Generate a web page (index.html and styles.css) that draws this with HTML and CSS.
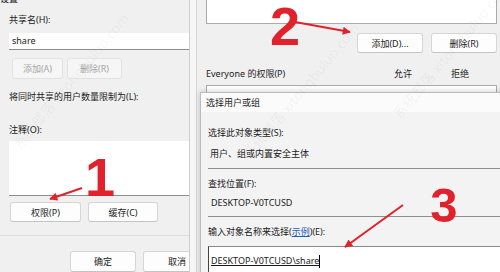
FILE: index.html
```html
<!DOCTYPE html>
<html lang="zh-CN">
<head>
    <meta charset="UTF-8">
    <title>共享权限设置</title>
    <link rel="stylesheet" href="styles.css">
</head>
<body>
    <div class="screen">
        <!-- 高级共享 -->
        <div class="share-dialog">
            <div class="cut-title"><span>设置</span></div>
            <div class="label first-label">共享名(H):</div>
            <div class="input share-name">share</div>
            <div class="btn-row add-row">
                <button class="btn disabled w-add">添加(A)</button>
                <button class="btn disabled w-del">删除(R)</button>
            </div>
            <div class="label limit-label">将同时共享的用户数量限制为(L):</div>
            <div class="label comment-label">注释(O):</div>
            <div class="textarea"></div>
            <div class="btn-row perm-row">
                <button class="btn w-perm">权限(P)</button>
                <button class="btn w-cache">缓存(C)</button>
            </div>
            <div class="separator"></div>
            <div class="btn-row ok-row">
                <button class="btn w-ok">确定</button>
                <button class="btn w-ok w-cancel">取消</button>
            </div>
        </div>
        <div class="strip"></div>

        <!-- share 的权限 -->
        <div class="perm-dialog">
            <div class="listbox top-list"></div>
            <div class="btn-row right-row">
                <button class="btn w-mid">添加(D)...</button>
                <button class="btn w-mid">删除(R)</button>
            </div>
            <div class="perm-head">
                <span>Everyone 的权限(P)</span>
                <span>允许</span>
                <span>拒绝</span>
            </div>
            <div class="listbox bottom-list"></div>
        </div>

        <!-- 选择用户或组 -->
        <div class="select-dialog">
            <div class="select-title">选择用户或组</div>
            <div class="select-body">
                <div class="label type-label">选择此对象类型(S):</div>
                <div class="field type-field">用户、组或内置安全主体</div>
                <div class="label loc-label">查找位置(F):</div>
                <div class="field loc-field">DESKTOP-V0TCUSD</div>
                <div class="label name-label">输入对象名称来选择(<a class="link">示例</a>)(E):</div>
                <div class="name-box"><span class="typed">DESKTOP-V0TCUSD\share</span><span class="caret"></span></div>
            </div>
        </div>

        <svg class="marks" width="500" height="272" viewBox="0 0 500 272">
            <defs>
                <marker id="head" viewBox="0 0 10 10" refX="9" refY="5" markerWidth="10" markerHeight="8" markerUnits="userSpaceOnUse" orient="auto">
                    <path d="M0 0 L10 5 L0 10 z" fill="#e1212b"/>
                </marker>
            </defs>
            <g class="watermark">
                <text transform="translate(20 150) rotate(-50)">系统部落 xitongbuluo.com</text>
                <text transform="translate(250 160) rotate(-50)">系统部落 xitongbuluo.com</text>
                <text transform="translate(400 120) rotate(-50)">系统部落 xitongbuluo.com</text>
            </g>
            <text class="num" x="100" y="196">1</text>
            <text class="num" x="285" y="45">2</text>
            <text class="num small" x="444" y="222">3</text>
            <line class="arrow" x1="82" y1="188" x2="50" y2="199" marker-end="url(#head)"/>
            <line class="arrow" x1="295" y1="22" x2="350" y2="32" marker-end="url(#head)"/>
            <line class="arrow" x1="403" y1="205" x2="345" y2="247" marker-end="url(#head)"/>
        </svg>
    </div>
</body>
</html>
```

FILE: styles.css
```css
body { margin: 0; font-family: "Noto Sans", "Noto Sans CJK SC", sans-serif; font-size: 9px; color: #1b1b1b; }
.screen {
    position: relative;
    width: 500px;
    height: 272px;
    overflow: hidden;
    display: flex;
    background: #f0f0f0;
}
.label { height: 12px; line-height: 12px; white-space: nowrap; }

/* buttons */
.btn-row { display: flex; }
.btn {
    font: inherit;
    color: #1b1b1b;
    height: 21px;
    padding: 0;
    flex-shrink: 0;
    background: #fdfdfd;
    border: 1px solid #d6d6d6;
    border-bottom-color: #c4c4c4;
    border-radius: 3px;
}
.btn.disabled { color: #a5a5a5; background: #f6f6f6; border-color: #e2e2e2; }

/* left dialog */
.share-dialog {
    width: 190px;
    flex-shrink: 0;
    box-sizing: border-box;
    padding-left: 9px;
    border-right: 1px solid #cdcdcd;
    overflow: hidden;
    display: flex;
    flex-direction: column;
}
.cut-title { height: 4px; overflow: hidden; margin-left: -9px; }
.cut-title span { display: block; line-height: 10px; margin-top: -6px; }
.first-label { margin-top: 10px; }
.input {
    margin-top: 7px;
    height: 17px;
    line-height: 16px;
    padding-left: 3px;
    background: #fff;
    border-bottom: 1px solid #8d8d8d;
    box-sizing: border-box;
}
.add-row { margin-top: 8px; margin-left: 3px; gap: 4px; }
.w-add { width: 51px; }
.w-del { width: 55px; }
.limit-label { margin-top: 12px; }
.comment-label { margin-top: 21px; }
.textarea {
    margin-top: 5px;
    height: 59px;
    box-sizing: border-box;
    background: #fff;
    border-bottom: 1px solid #8d8d8d;
}
.perm-row { margin-top: 6px; margin-left: 1px; gap: 7px; }
.perm-row .btn { height: 20px; }
.w-perm { width: 71px; }
.w-cache { width: 70px; }
.separator { margin-top: 13px; margin-left: -9px; height: 1px; background: #dedede; flex-shrink: 0; }
.ok-row { margin-top: 15px; margin-left: 61px; gap: 7px; width: 139px; align-self: flex-start; flex-shrink: 0; }
.w-ok { width: 66px; min-width: 66px; }
.w-cancel { text-align: left; padding-left: 24px; }

.strip { width: 6px; flex-shrink: 0; background: #f6f6f6; border-right: 1px solid #d6d6d6; }

/* permissions dialog */
.perm-dialog {
    flex: 1;
    padding: 0 3px 0 9px;
    display: flex;
    flex-direction: column;
}
.listbox { background: #fff; border: 1px solid #ababab; }
.top-list { margin-top: -1px; height: 23px; }
.right-row { margin-top: 9px; justify-content: flex-end; gap: 8px; }
.right-row .btn { height: 20px; }
.w-mid { width: 66px; }
.perm-head {
    margin-top: 15px;
    height: 12px;
    line-height: 12px;
    display: grid;
    grid-template-columns: 188px 57px 1fr;
}
.bottom-list { margin-top: 5px; height: 60px; }

/* select user dialog */
.select-dialog {
    position: absolute;
    left: 200px;
    top: 92px;
    width: 320px;
    height: 200px;
    border: 1px solid #bcbcbc;
    box-shadow: 0 0 6px rgba(0, 0, 0, 0.22);
    background: #f3f3f3;
}
.select-title {
    height: 19px;
    line-height: 19px;
    padding-left: 5px;
    background: #fbfbfb;
}
.select-body { padding-left: 7px; display: flex; flex-direction: column; }
.type-label { margin-top: 15px; }
.field {
    height: 25px;
    box-sizing: border-box;
    padding: 0 0 4px 2px;
    line-height: 20px;
    border-bottom: 1px solid #8f8f8f;
}
.type-field { margin-top: 5px; }
.loc-label { margin-top: 9px; }
.loc-field { margin-top: 3px; height: 24px; padding-left: 3px; }
.name-label { margin-top: 9px; }
.link { color: #1a5fb4; text-decoration: underline; }
.name-box {
    margin-top: 8px;
    height: 30px;
    box-sizing: border-box;
    padding: 4px 0 0 2px;
    line-height: 20px;
    background: #fff;
    border: 1px solid #8a8a8a;
    border-left-color: #444;
    display: flex;
    align-items: flex-start;
}
.typed { text-decoration: underline; }
.caret { width: 1px; height: 13px; margin-top: 4px; background: #000; }

/* red marks */
.marks { position: absolute; left: 0; top: 0; pointer-events: none; }
.num {
    font-family: "Liberation Sans", sans-serif;
    font-weight: bold;
    font-size: 54px;
    fill: #e1212b;
    text-anchor: middle;
}
.num.small { font-size: 49px; }
.arrow { stroke: #e1212b; stroke-width: 2; }
.watermark text {
    font-family: "Noto Sans", "Noto Sans CJK SC", sans-serif;
    font-size: 14px;
    fill: rgba(0, 0, 0, 0.05);
}
```
